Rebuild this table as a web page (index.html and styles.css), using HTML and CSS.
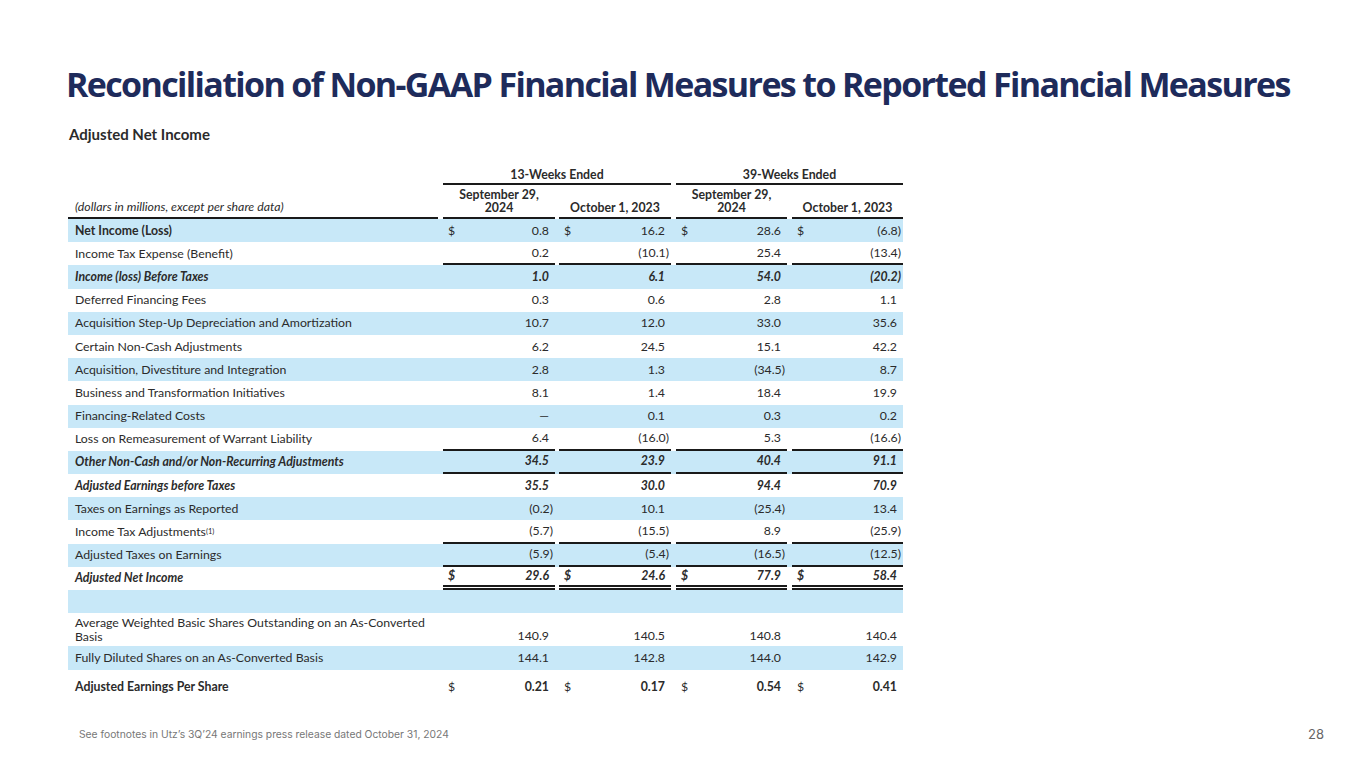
FILE: index.html
```html
<!DOCTYPE html>
<html>
<head>
<meta charset="utf-8">
<title>Reconciliation of Non-GAAP Financial Measures</title>
<link rel="stylesheet" href="styles.css">
</head>
<body>
<div class="slide">
  <h1 class="title">Reconciliation of Non-GAAP Financial Measures to Reported Financial Measures</h1>
  <h2 class="subtitle">Adjusted Net Income</h2>

  <div class="table">
    <div class="row group">
      <div class="grp g1">13-Weeks Ended</div>
      <div class="grp g2">39-Weeks Ended</div>
    </div>
    <div class="row colhead">
      <div class="lab ul"><em>(dollars in millions, except per share data)</em></div>
      <div class="hd c1 ul">September 29,<br>2024</div>
      <div class="hd c2 ul">October 1, 2023</div>
      <div class="hd c3 ul">September 29,<br>2024</div>
      <div class="hd c4 ul">October 1, 2023</div>
    </div>

    <div class="row blue">
      <div class="lab b">Net Income (Loss)</div>
      <div class="cell c1"><span>$</span><span class="v">0.8</span></div>
      <div class="cell c2"><span>$</span><span class="v">16.2</span></div>
      <div class="cell c3"><span>$</span><span class="v">28.6</span></div>
      <div class="cell c4"><span>$</span><span class="v n">(6.8)</span></div>
    </div>
    <div class="row">
      <div class="lab">Income Tax Expense (Benefit)</div>
      <div class="cell c1 ul"><span class="v">0.2</span></div>
      <div class="cell c2 ul"><span class="v n">(10.1)</span></div>
      <div class="cell c3 ul"><span class="v">25.4</span></div>
      <div class="cell c4 ul"><span class="v n">(13.4)</span></div>
    </div>
    <div class="row blue bi">
      <div class="lab">Income (loss) Before Taxes</div>
      <div class="cell c1"><span class="v">1.0</span></div>
      <div class="cell c2"><span class="v">6.1</span></div>
      <div class="cell c3"><span class="v">54.0</span></div>
      <div class="cell c4"><span class="v n">(20.2)</span></div>
    </div>
    <div class="row">
      <div class="lab">Deferred Financing Fees</div>
      <div class="cell c1"><span class="v">0.3</span></div>
      <div class="cell c2"><span class="v">0.6</span></div>
      <div class="cell c3"><span class="v">2.8</span></div>
      <div class="cell c4"><span class="v">1.1</span></div>
    </div>
    <div class="row blue">
      <div class="lab">Acquisition Step-Up Depreciation and Amortization</div>
      <div class="cell c1"><span class="v">10.7</span></div>
      <div class="cell c2"><span class="v">12.0</span></div>
      <div class="cell c3"><span class="v">33.0</span></div>
      <div class="cell c4"><span class="v">35.6</span></div>
    </div>
    <div class="row">
      <div class="lab">Certain Non-Cash Adjustments</div>
      <div class="cell c1"><span class="v">6.2</span></div>
      <div class="cell c2"><span class="v">24.5</span></div>
      <div class="cell c3"><span class="v">15.1</span></div>
      <div class="cell c4"><span class="v">42.2</span></div>
    </div>
    <div class="row blue">
      <div class="lab">Acquisition, Divestiture and Integration</div>
      <div class="cell c1"><span class="v">2.8</span></div>
      <div class="cell c2"><span class="v">1.3</span></div>
      <div class="cell c3"><span class="v n">(34.5)</span></div>
      <div class="cell c4"><span class="v">8.7</span></div>
    </div>
    <div class="row">
      <div class="lab">Business and Transformation Initiatives</div>
      <div class="cell c1"><span class="v">8.1</span></div>
      <div class="cell c2"><span class="v">1.4</span></div>
      <div class="cell c3"><span class="v">18.4</span></div>
      <div class="cell c4"><span class="v">19.9</span></div>
    </div>
    <div class="row blue">
      <div class="lab">Financing-Related Costs</div>
      <div class="cell c1"><span class="v">—</span></div>
      <div class="cell c2"><span class="v">0.1</span></div>
      <div class="cell c3"><span class="v">0.3</span></div>
      <div class="cell c4"><span class="v">0.2</span></div>
    </div>
    <div class="row">
      <div class="lab">Loss on Remeasurement of Warrant Liability</div>
      <div class="cell c1 ul"><span class="v">6.4</span></div>
      <div class="cell c2 ul"><span class="v n">(16.0)</span></div>
      <div class="cell c3 ul"><span class="v">5.3</span></div>
      <div class="cell c4 ul"><span class="v n">(16.6)</span></div>
    </div>
    <div class="row blue bi">
      <div class="lab">Other Non-Cash and/or Non-Recurring Adjustments</div>
      <div class="cell c1 ul"><span class="v">34.5</span></div>
      <div class="cell c2 ul"><span class="v">23.9</span></div>
      <div class="cell c3 ul"><span class="v">40.4</span></div>
      <div class="cell c4 ul"><span class="v">91.1</span></div>
    </div>
    <div class="row bi">
      <div class="lab">Adjusted Earnings before Taxes</div>
      <div class="cell c1"><span class="v">35.5</span></div>
      <div class="cell c2"><span class="v">30.0</span></div>
      <div class="cell c3"><span class="v">94.4</span></div>
      <div class="cell c4"><span class="v">70.9</span></div>
    </div>
    <div class="row blue">
      <div class="lab">Taxes on Earnings as Reported</div>
      <div class="cell c1"><span class="v n">(0.2)</span></div>
      <div class="cell c2"><span class="v">10.1</span></div>
      <div class="cell c3"><span class="v n">(25.4)</span></div>
      <div class="cell c4"><span class="v">13.4</span></div>
    </div>
    <div class="row">
      <div class="lab">Income Tax Adjustments<sup>(1)</sup></div>
      <div class="cell c1 ul"><span class="v n">(5.7)</span></div>
      <div class="cell c2 ul"><span class="v n">(15.5)</span></div>
      <div class="cell c3 ul"><span class="v">8.9</span></div>
      <div class="cell c4 ul"><span class="v n">(25.9)</span></div>
    </div>
    <div class="row blue">
      <div class="lab">Adjusted Taxes on Earnings</div>
      <div class="cell c1 ul"><span class="v n">(5.9)</span></div>
      <div class="cell c2 ul"><span class="v n">(5.4)</span></div>
      <div class="cell c3 ul"><span class="v n">(16.5)</span></div>
      <div class="cell c4 ul"><span class="v n">(12.5)</span></div>
    </div>
    <div class="row bi">
      <div class="lab">Adjusted Net Income</div>
      <div class="cell c1 dbl"><span>$</span><span class="v">29.6</span></div>
      <div class="cell c2 dbl"><span>$</span><span class="v">24.6</span></div>
      <div class="cell c3 dbl"><span>$</span><span class="v">77.9</span></div>
      <div class="cell c4 dbl"><span>$</span><span class="v">58.4</span></div>
    </div>
    <div class="row blue"></div>
    <div class="row tall">
      <div class="lab">Average Weighted Basic Shares Outstanding on an As-Converted<br>Basis</div>
      <div class="cell c1"><span class="v">140.9</span></div>
      <div class="cell c2"><span class="v">140.5</span></div>
      <div class="cell c3"><span class="v">140.8</span></div>
      <div class="cell c4"><span class="v">140.4</span></div>
    </div>
    <div class="row blue mid">
      <div class="lab">Fully Diluted Shares on an As-Converted Basis</div>
      <div class="cell c1"><span class="v">144.1</span></div>
      <div class="cell c2"><span class="v">142.8</span></div>
      <div class="cell c3"><span class="v">144.0</span></div>
      <div class="cell c4"><span class="v">142.9</span></div>
    </div>
    <div class="row eps">
      <div class="lab b">Adjusted Earnings Per Share</div>
      <div class="cell c1"><span>$</span><span class="v b">0.21</span></div>
      <div class="cell c2"><span>$</span><span class="v b">0.17</span></div>
      <div class="cell c3"><span>$</span><span class="v b">0.54</span></div>
      <div class="cell c4"><span>$</span><span class="v b">0.41</span></div>
    </div>
  </div>

  <div class="footer">
    <p class="note">See footnotes in Utz’s 3Q’24 earnings press release dated October 31, 2024</p>
    <p class="page">28</p>
  </div>
</div>
</body>
</html>
```
FILE: styles.css
```css
* { box-sizing: border-box; margin: 0; padding: 0; }

body {
  width: 1365px;
  height: 768px;
  background: #ffffff;
  font-family: Lato, "Liberation Sans", sans-serif;
  color: #2b2b2b;
  overflow: hidden;
}

.slide {
  width: 1365px;
  height: 768px;
  padding: 64px 0 0 66px;
}

.title {
  font-family: "Open Sans", sans-serif;
  font-weight: 700;
  font-size: 34px;
  line-height: 40px;
  letter-spacing: -1.64px;
  color: #1e2b5b;
  white-space: nowrap;
}

.subtitle {
  margin: 22px 0 0 3px;
  font-size: 15px;
  line-height: 17px;
  font-weight: 700;
  color: #2b2b2b;
}

.table {
  margin: 23px 0 0 2px;
  width: 835px;
  font-size: 12.3px;
  line-height: 14px;
}

.row {
  display: grid;
  grid-template-columns: 370px 5px 112px 4px 112px 5px 111px 5px 111px;
  height: 23.2px;
}

.row.blue { background: #c8e8f8; }

.row.group { height: 19px; }
.row.colhead { height: 34px; }
.row.tall { height: 33px; }
.row.mid { height: 24px; }
.row.eps { height: 34px; }

.grp {
  font-weight: 700;
  text-align: center;
  border-bottom: 2px solid #1a1a1a;
  display: flex;
  align-items: center;
  justify-content: center;
}
.g1 { grid-column: 3 / 6; }
.g2 { grid-column: 7 / 10; }

.lab {
  grid-column: 1;
  display: flex;
  align-items: center;
  padding-left: 7px;
}
.colhead .lab { align-items: flex-end; padding-bottom: 3px; }
.tall .lab { display: block; padding-top: 3px; line-height: 13.5px; }

.hd {
  font-weight: 700;
  text-align: center;
  display: flex;
  align-items: flex-end;
  justify-content: center;
  padding-bottom: 3px;
  line-height: 13px;
}

.c1 { grid-column: 3; }
.c2 { grid-column: 5; }
.c3 { grid-column: 7; }
.c4 { grid-column: 9; }

.cell {
  display: flex;
  justify-content: space-between;
  align-items: center;
  padding: 0 2px 0 5px;
}
.tall .cell { align-items: flex-end; padding-bottom: 3px; }

.cell .v { margin-left: auto; padding-right: 4px; }
.cell .v.n { padding-right: 0; }

.ul { border-bottom: 2px solid #1a1a1a; }
.dbl { border-bottom: 5px double #1a1a1a; }

.b { font-weight: 700; }
.bi { font-weight: 700; font-style: italic; }

sup {
  font-size: 7.5px;
  line-height: 0;
  vertical-align: 7px;
}

.footer {
  display: flex;
  justify-content: space-between;
  align-items: center;
  width: 1258px;
  margin-top: 22px;
  padding-left: 13px;
}

.note {
  font-family: Inter, "Open Sans", sans-serif;
  font-size: 10.3px;
  color: #777777;
}

.page {
  font-family: Inter, "Liberation Sans", sans-serif;
  font-size: 13px;
  color: #666666;
}
```
